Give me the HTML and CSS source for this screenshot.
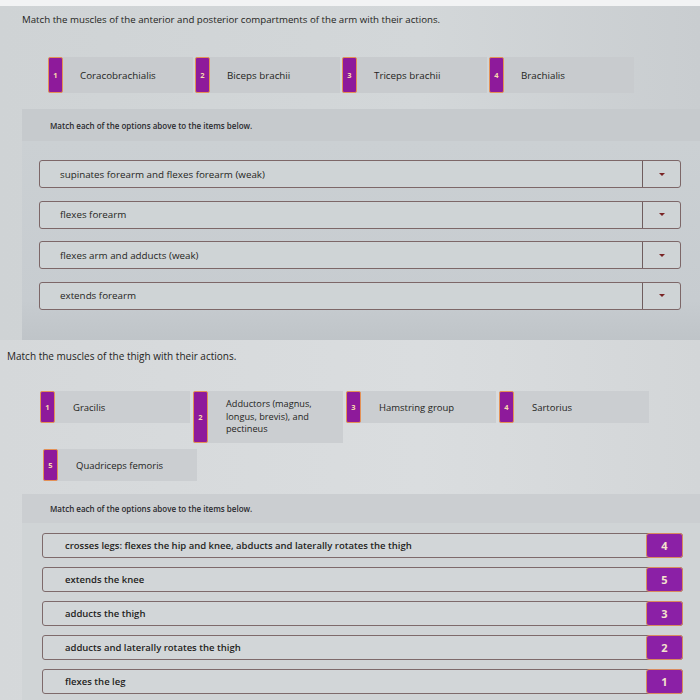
FILE: index.html
```html
<!DOCTYPE html>
<html>
<head>
<meta charset="utf-8">
<link rel="stylesheet" href="styles.css">
</head>
<body>
<section class="sec sec-arm">
  <p class="title">Match the muscles of the anterior and posterior compartments of the arm with their actions.</p>
  <div class="cards cards-arm">
    <div class="card"><span class="badge">1</span><span class="ctext">Coracobrachialis</span></div>
    <div class="card"><span class="badge">2</span><span class="ctext">Biceps brachii</span></div>
    <div class="card"><span class="badge">3</span><span class="ctext">Triceps brachii</span></div>
    <div class="card"><span class="badge">4</span><span class="ctext">Brachialis</span></div>
  </div>
  <div class="band"><span>Match each of the options above to the items below.</span></div>
  <div class="matcharea">
    <div class="drop"><span class="dtext">supinates forearm and flexes forearm (weak)</span><span class="arrow"><i></i></span></div>
    <div class="drop"><span class="dtext">flexes forearm</span><span class="arrow"><i></i></span></div>
    <div class="drop"><span class="dtext">flexes arm and adducts (weak)</span><span class="arrow"><i></i></span></div>
    <div class="drop"><span class="dtext">extends forearm</span><span class="arrow"><i></i></span></div>
  </div>
</section>
<section class="sec sec-thigh">
  <p class="title title2">Match the muscles of the thigh with their actions.</p>
  <div class="cards cards-thigh">
    <div class="card tcard"><span class="badge">1</span><span class="ctext">Gracilis</span></div>
    <div class="card tcard tall"><span class="badge">2</span><span class="ctext multi">Adductors (magnus,<br>longus, brevis), and<br>pectineus</span></div>
    <div class="card tcard"><span class="badge">3</span><span class="ctext">Hamstring group</span></div>
    <div class="card tcard"><span class="badge">4</span><span class="ctext">Sartorius</span></div>
  </div>
  <div class="cards cards-thigh2">
    <div class="card tcard"><span class="badge">5</span><span class="ctext">Quadriceps femoris</span></div>
  </div>
  <div class="band band2"><span>Match each of the options above to the items below.</span></div>
  <div class="itemarea">
    <div class="item"><span class="itext">crosses legs: flexes the hip and knee, abducts and laterally rotates the thigh</span><span class="nbadge">4</span></div>
    <div class="item"><span class="itext">extends the knee</span><span class="nbadge">5</span></div>
    <div class="item"><span class="itext">adducts the thigh</span><span class="nbadge">3</span></div>
    <div class="item"><span class="itext">adducts and laterally rotates the thigh</span><span class="nbadge">2</span></div>
    <div class="item"><span class="itext">flexes the leg</span><span class="nbadge">1</span></div>
  </div>
</section>
</body>
</html>
```
FILE: styles.css
```css
html, body {
  margin: 0;
  padding: 0;
  width: 700px;
  height: 700px;
  overflow: hidden;
  font-family: "Open Sans", Lato, Arial, sans-serif;
  color: #1f1f22;
  background: #d4d7d9;
}
.sec { box-sizing: border-box; }
.sec-arm {
  height: 340px;
  border-top: 6px solid #f2f3f4;
  background: linear-gradient(90deg, #cfd3d5 0%, #d3d7d9 60%, #c9cdd0 100%);
  padding-left: 22px;
  display: flex;
  flex-direction: column;
}
.title {
  margin: 8px 0 0 0;
  font-size: 9.7px;
  line-height: 12px;
  font-weight: 500;
}
.cards { display: flex; gap: 2px; align-items: flex-start; }
.cards-arm { margin: 31px 0 0 26px; }
.card {
  display: flex;
  align-items: center;
  width: 145px;
  height: 36px;
  background: #c8cbce;
}
.badge {
  box-sizing: border-box;
  width: 15px;
  align-self: stretch;
  background: #8e1a9b;
  border: 1px solid #e49156;
  border-radius: 2px;
  color: #f7dcae;
  font-size: 7.5px;
  font-weight: 700;
  display: flex;
  align-items: center;
  justify-content: center;
}
.ctext {
  padding-left: 17px;
  font-size: 9.8px;
  line-height: 13px;
}
.band {
  margin-top: 16px;
  height: 32px;
  background: #c6cacd;
  display: flex;
  align-items: center;
  padding-left: 28px;
  font-size: 8px;
  font-weight: 600;
  color: #2a2a2e;
}
.matcharea {
  flex: 1;
  background: linear-gradient(180deg, #cbd0d3 0%, #c7ccd0 80%, #bfc4c8 100%);
  padding: 19px 19px 0 17px;
  display: flex;
  flex-direction: column;
  gap: 12.5px;
}
.drop {
  box-sizing: border-box;
  height: 28px;
  border: 1px solid #7d6768;
  border-radius: 3px;
  background: #cfd4d6;
  display: flex;
  align-items: center;
}
.dtext {
  flex: 1;
  padding-left: 20px;
  font-size: 9.8px;
}
.arrow {
  width: 37px;
  align-self: stretch;
  border-left: 1px solid #6f5d5e;
  display: flex;
  align-items: center;
  justify-content: center;
}
.arrow i {
  width: 0;
  height: 0;
  border-left: 3px solid transparent;
  border-right: 3px solid transparent;
  border-top: 3px solid #7a2424;
}
.sec-thigh {
  height: 360px;
  background: linear-gradient(90deg, #d5d8da 0%, #dadddf 60%, #d3d6d8 100%);
  display: flex;
  flex-direction: column;
}
.title2 {
  margin: 10px 0 0 7px;
  font-size: 10px;
}
.cards-thigh { margin: 29px 0 0 40px; gap: 3px; }
.tcard { width: 150px; height: 32px; background: #cbced1; }
.tcard.tall { height: 52px; }
.tcard .ctext { padding-left: 18px; font-size: 9.5px; }
.tcard .ctext.multi { font-size: 9.2px; line-height: 12.6px; }
.cards-thigh2 { margin: 6px 0 0 43px; }
.cards-thigh2 .tcard { width: 154px; }
.band2 {
  margin: 13px 0 0 22px;
  height: 29px;
  background: #cbced1;
}
.itemarea {
  flex: 1;
  margin-left: 22px;
  background: #d0d4d6;
  padding: 10px 17px 0 20px;
  display: flex;
  flex-direction: column;
  gap: 9px;
}
.item {
  box-sizing: border-box;
  height: 25px;
  border: 1px solid #7e6a6b;
  border-radius: 3px;
  background: #d2d6d8;
  display: flex;
  align-items: center;
}
.itext {
  flex: 1;
  padding-left: 22px;
  font-size: 9.5px;
  font-weight: 600;
}
.nbadge {
  box-sizing: border-box;
  width: 37px;
  height: 25px;
  margin: -1px -1px -1px 0;
  background: #8b20a6;
  border: 1px solid #d98a5e;
  border-radius: 3px;
  color: #f4e4cc;
  font-size: 11px;
  font-weight: 700;
  display: flex;
  align-items: center;
  justify-content: center;
}
```
